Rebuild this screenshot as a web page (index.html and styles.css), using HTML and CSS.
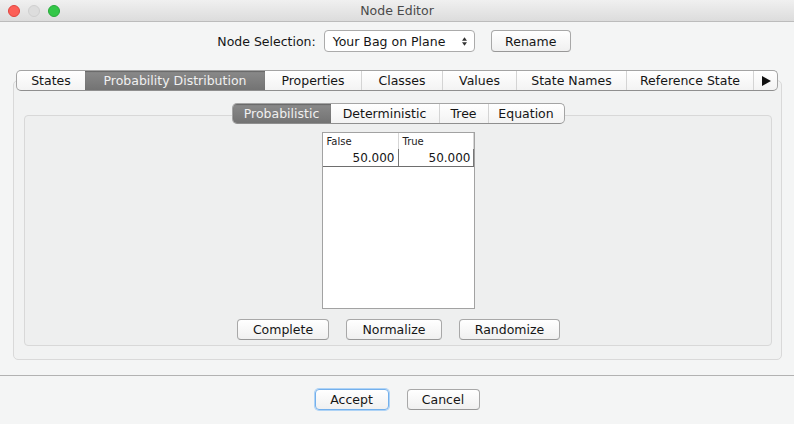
FILE: index.html
```html
<!DOCTYPE html>
<html>
<head>
<meta charset="utf-8">
<link rel="stylesheet" href="styles.css">
</head>
<body>
<div class="window">
  <div class="titlebar">
    <div class="lights">
      <span class="light red"></span>
      <span class="light gray"></span>
      <span class="light green"></span>
    </div>
    <div class="title">Node Editor</div>
    <div></div>
  </div>

  <div class="toprow">
    <span class="label">Node Selection:</span>
    <div class="combo">
      <span>Your Bag on Plane</span>
      <svg class="updown" width="5" height="9" viewBox="0 0 6 10"><polygon points="0,4 3,0 6,4" fill="#333"/><polygon points="0,6 3,10 6,6" fill="#333"/></svg>
    </div>
    <div class="btn rename">Rename</div>
  </div>

  <div class="outer">
    <div class="tabbar">
      <div class="tab t-states">States</div>
      <div class="tab sel t-pd">Probability Distribution</div>
      <div class="tab nosep t-props">Properties</div>
      <div class="tab t-classes">Classes</div>
      <div class="tab t-values">Values</div>
      <div class="tab t-names">State Names</div>
      <div class="tab t-ref">Reference State</div>
      <div class="tab t-arrow"><svg width="9" height="10" viewBox="0 0 9 10"><polygon points="0,0 9,5 0,10" fill="#111"/></svg></div>
    </div>
    <div class="panel">
      <div class="tabbar inner">
        <div class="tab sel t-prob">Probabilistic</div>
        <div class="tab nosep t-det">Deterministic</div>
        <div class="tab t-tree">Tree</div>
        <div class="tab t-eq">Equation</div>
      </div>
      <div class="subpanel">
        <div class="scroll">
          <div class="row head">
            <div class="cell c1">False</div>
            <div class="cell c2">True</div>
          </div>
          <div class="row data">
            <div class="cell c1">50.000</div>
            <div class="cell c2">50.000</div>
          </div>
        </div>
        <div class="btnrow">
          <div class="btn b-complete">Complete</div>
          <div class="btn b-normalize">Normalize</div>
          <div class="btn b-randomize">Randomize</div>
        </div>
      </div>
    </div>
  </div>

  <div class="sep"></div>

  <div class="footer">
    <div class="btn accept">Accept</div>
    <div class="btn cancel">Cancel</div>
  </div>
</div>
</body>
</html>
```

FILE: styles.css
```css
html, body {
  margin: 0;
  padding: 0;
}
body {
  width: 794px;
  height: 424px;
  overflow: hidden;
  background: #f4f5f5;
  font-family: "DejaVu Sans", "Liberation Sans", sans-serif;
  font-size: 12.5px;
  color: #151515;
}
.window {
  display: flex;
  flex-direction: column;
  height: 424px;
}

/* title bar */
.titlebar {
  height: 21px;
  border-bottom: 1px solid #bcbcbc;
  background: linear-gradient(#f0f0f0, #dcdcdc);
  display: grid;
  grid-template-columns: 1fr auto 1fr;
  align-items: center;
}
.lights {
  display: flex;
  gap: 8px;
  padding-left: 8px;
  padding-top: 1px;
}
.light {
  width: 12px;
  height: 12px;
  border-radius: 50%;
  box-sizing: border-box;
}
.light.red { background: #fc5f57; border: 1px solid #e0443e; }
.light.gray { background: #dddddd; border: 1px solid #cfcfcf; }
.light.green { background: #33c748; border: 1px solid #27a93a; }
.title {
  color: #4a4a4a;
  font-size: 12.5px;
}

/* top row */
.toprow {
  display: flex;
  justify-content: center;
  align-items: center;
  margin-top: 8px;
  height: 22px;
  padding-right: 6px;
}
.label { margin-right: 8px; }
.combo {
  width: 151px;
  height: 22px;
  box-sizing: border-box;
  border: 1px solid #ababab;
  border-radius: 4px;
  background: #fff;
  display: flex;
  align-items: center;
  justify-content: space-between;
  padding: 0 7px 0 8px;
}
.updown { display: block; }

.btn {
  box-sizing: border-box;
  height: 21px;
  border: 1px solid #a8a8a8;
  border-bottom-color: #989898;
  border-radius: 4px;
  background: linear-gradient(#ffffff, #f0f0f0);
  display: flex;
  align-items: center;
  justify-content: center;
}
.rename {
  width: 80px;
  height: 22px;
  margin-left: 16px;
}

/* outer tabs */
.outer {
  margin: 18px 12px 0 13px;
  display: flex;
  flex-direction: column;
}
.tabbar {
  position: relative;
  z-index: 1;
  display: flex;
  box-sizing: border-box;
  height: 21px;
  width: 762px;
  margin-left: 3px;
  border: 1px solid #a4a4a4;
  border-bottom-color: #8f8f8f;
  border-radius: 5px;
  background: linear-gradient(#ffffff, #f3f3f3);
  overflow: hidden;
}
.tab {
  box-sizing: border-box;
  height: 100%;
  display: flex;
  align-items: center;
  justify-content: center;
  border-left: 1px solid #d4d4d4;
  white-space: nowrap;
}
.tab:first-child { border-left: none; }
.tab.nosep { border-left: none; }
.tab.sel {
  border-left: none;
  background: linear-gradient(#8a8a8a, #737373);
  color: #f0f0f0;
  box-shadow: inset 0 1px 1px rgba(0,0,0,0.25);
}
.t-states { width: 68px; }
.t-pd { width: 180px; }
.t-props { width: 96px; }
.t-classes { width: 81px; }
.t-values { width: 74px; }
.t-names { width: 110px; }
.t-ref { width: 127px; }
.t-arrow { width: 24px; }
.t-arrow svg { display: block; margin-left: 1px; }

.panel {
  margin-top: -11px;
  height: 280px;
  box-sizing: border-box;
  border: 1px solid #d9d9d9;
  border-radius: 5px;
  background: #f1f2f2;
  padding: 22px 9px 13px 10px;
  display: flex;
  flex-direction: column;
}

/* inner tabs */
.tabbar.inner {
  width: 333px;
  margin: 0 auto;
}
.t-prob { width: 98px; }
.t-det { width: 108px; }
.t-tree { width: 49px; }
.t-eq { width: 76px; }

.subpanel {
  margin-top: -9px;
  height: 231px;
  box-sizing: border-box;
  border: 1px solid #d8d8d8;
  border-radius: 4px;
  background: #eeefef;
  padding: 16px 0 5px 0;
  display: flex;
  flex-direction: column;
  align-items: center;
}

/* table */
.scroll {
  width: 153px;
  height: 177px;
  box-sizing: border-box;
  border: 1px solid #a2a2a2;
  background: #fff;
}
.row {
  display: flex;
}
.row.head {
  height: 16px;
  font-size: 10px;
  color: #222;
}
.row.head .cell {
  border-right: 1px solid #d6d6d6;
  padding-left: 4px;
  align-items: center;
}
.row.data {
  height: 18px;
  font-size: 12px;
  border-bottom: 1px solid #6e6e6e;
  width: 151px;
  box-sizing: border-box;
}
.cell {
  box-sizing: border-box;
  display: flex;
  height: 100%;
}
.c1 { width: 76px; }
.c2 { width: 75px; }
.row.data .cell {
  border-right: 1px solid #777;
  justify-content: flex-end;
  align-items: center;
  padding-right: 2px;
}
.row.data .c1 { padding-right: 3px; }

.btnrow {
  margin-top: 10px;
  display: flex;
  gap: 17px;
  margin-left: 1px;
}
.b-complete { width: 92px; }
.b-normalize { width: 96px; }
.b-randomize { width: 101px; }

.sep {
  height: 1px;
  background: #b2b2b2;
  margin-top: 15px;
}

.footer {
  margin-top: 13px;
  display: flex;
  justify-content: center;
  gap: 18px;
}
.accept {
  width: 74px;
  border-color: #74b0ec;
  box-shadow: 0 0 0 1px #aed3f6;
}
.cancel { width: 73px; }
```
